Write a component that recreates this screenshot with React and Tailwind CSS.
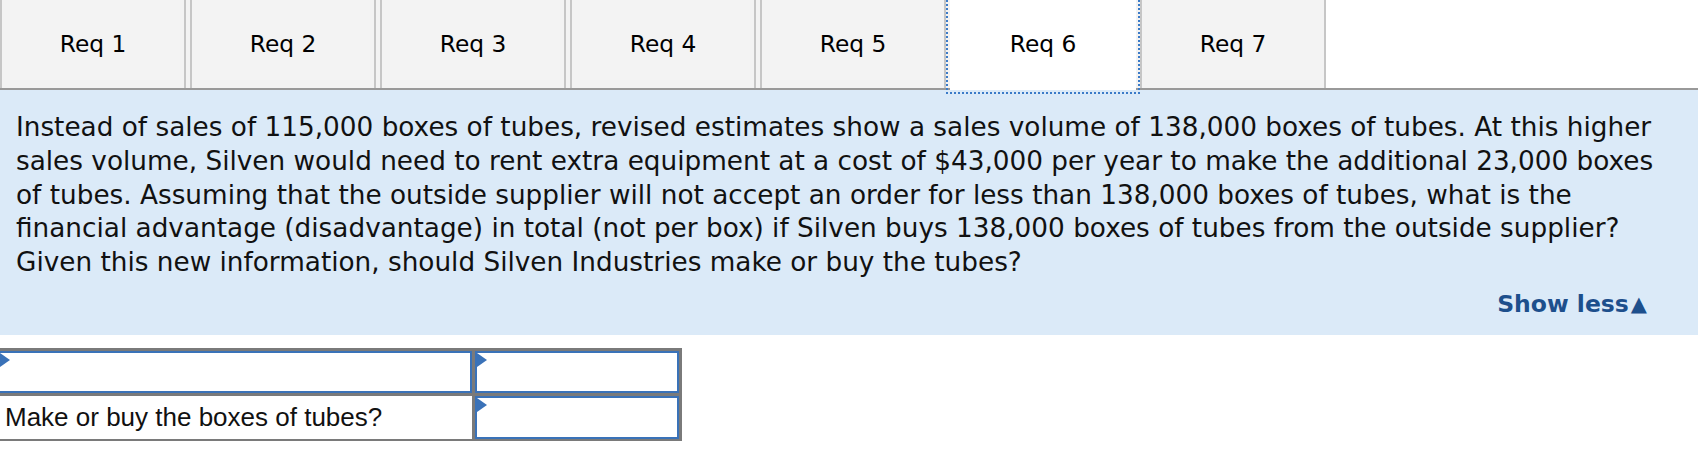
import React from "react";

const tabs = ["Req 1", "Req 2", "Req 3", "Req 4", "Req 5", "Req 6", "Req 7"];

function Flag() {
  return (
    <svg width="10" height="14" viewBox="0 0 10 14" className="absolute left-0 top-0">
      <polygon points="0,0 10,7 0,14" fill="#3a72b8" />
    </svg>
  );
}

export default function App() {
  return (
    <div className="w-[1708px] h-[452px] bg-white overflow-hidden" style={{ fontFamily: '"DejaVu Sans", Verdana, sans-serif' }}>
      <div className="w-[1698px]">
        {/* Tab bar */}
        <div className="flex h-[90px] border-b-2 border-[#999999]">
          <div className="flex gap-[4px] bg-[#f3f3f3] h-[88px]">
            {tabs.map((t, i) =>
              i === 5 ? (
                <div
                  key={t}
                  className="w-[186px] h-[90px] -mb-[2px] pb-[2px] bg-white flex items-center justify-center text-[23.3px] text-black outline-2 outline-dotted outline-[#3b7bc8] outline-offset-2 relative z-10"
                >
                  {t}
                </div>
              ) : (
                <div
                  key={t}
                  className="w-[186px] h-[88px] bg-[#f3f3f3] border-x-2 border-[#c6c6c6] flex items-center justify-center text-[23.3px] text-black"
                >
                  {t}
                </div>
              )
            )}
          </div>
        </div>

        {/* Question panel */}
        <div className="bg-[#dbeaf8] h-[245px] pl-[16px] pr-[40px] pt-[21px] flex flex-col">
          <p className="text-[26.3px] leading-[33.75px] text-[#111]">
            Instead of sales of 115,000 boxes of tubes, revised estimates show a sales volume of 138,000 boxes of tubes. At this higher sales volume, Silven would need to rent extra equipment at a cost of $43,000 per year to make the additional 23,000 boxes of tubes. Assuming that the outside supplier will not accept an order for less than 138,000 boxes of tubes, what is the financial advantage (disadvantage) in total (not per box) if Silven buys 138,000 boxes of tubes from the outside supplier? Given this new information, should Silven Industries make or buy the tubes?
          </p>
          <div className="flex justify-end mt-auto mb-[16px] pr-[11px]">
            <span className="font-bold text-[23.5px] leading-[30px] text-[#1d4f8c] flex items-center">
              Show less<span className="text-[21px] ml-[2px]">▲</span>
            </span>
          </div>
        </div>

        {/* Answer table */}
        <div className="mt-[13px] w-[682px] bg-[#7a7a7a] pt-[3px] pr-[3px] pb-[2px]">
          <div className="grid grid-cols-[472px_204px] gap-[3px]">
            <div className="relative h-[42px] bg-white border-2 border-l-0 border-[#3a72b8]">
              <Flag />
            </div>
            <div className="relative h-[42px] bg-white border-2 border-[#3a72b8]">
              <Flag />
            </div>
            <div className="h-[43px] bg-white flex items-center pl-[5px] text-[26px] text-[#111]" style={{ fontFamily: '"Liberation Sans", Arial, sans-serif' }}>
              Make or buy the boxes of tubes?
            </div>
            <div className="relative h-[43px] bg-white border-2 border-[#3a72b8]">
              <Flag />
            </div>
          </div>
        </div>
      </div>
    </div>
  );
}
